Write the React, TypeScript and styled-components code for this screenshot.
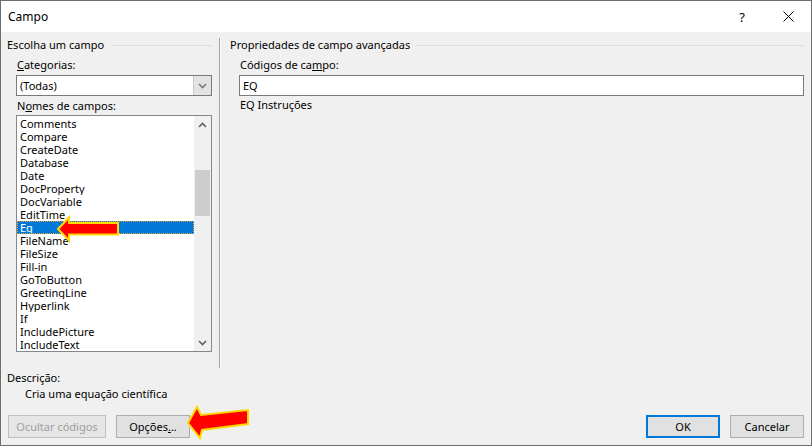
import React from "react";
import styled, { createGlobalStyle } from "styled-components";

const GlobalStyle = createGlobalStyle`
  html, body {
    margin: 0;
    padding: 0;
    background: #f0f0f0;
  }
  body {
    font-family: "Noto Sans", "Open Sans", sans-serif;
    font-size: 11px;
    color: #000;
  }
`;

const fields = [
  "Comments",
  "Compare",
  "CreateDate",
  "Database",
  "Date",
  "DocProperty",
  "DocVariable",
  "EditTime",
  "Eq",
  "FileName",
  "FileSize",
  "Fill-in",
  "GoToButton",
  "GreetingLine",
  "Hyperlink",
  "If",
  "IncludePicture",
  "IncludeText",
];

const Window = styled.div`
  position: relative;
  width: 812px;
  height: 446px;
  box-sizing: border-box;
  border: 1px solid #6e6e6e;
  background: #f0f0f0;
  display: flex;
  flex-direction: column;
  overflow: hidden;
`;

const TitleBar = styled.div`
  height: 31px;
  background: #fff;
  display: flex;
  align-items: center;
  padding-left: 7px;
`;

const Title = styled.div`
  flex: 1;
  font-size: 12px;
`;

const TitleButton = styled.div`
  width: 46px;
  height: 31px;
  display: flex;
  align-items: center;
  justify-content: center;
  font-size: 13px;
`;

const Main = styled.div`
  display: flex;
  height: 336px;
`;

const LeftPanel = styled.div`
  width: 218px;
  padding: 0 7px 0 6px;
  box-sizing: border-box;
  display: flex;
  flex-direction: column;
`;

const RightPanel = styled.div`
  flex: 1;
  padding: 0 7px 0 9px;
  display: flex;
  flex-direction: column;
`;

const Separator = styled.div`
  width: 1px;
  margin-top: 6px;
  background: #a0a0a0;
  border-right: 1px solid #fff;
`;

const GroupLabel = styled.div`
  margin-top: 6px;
  height: 14px;
  display: flex;
  align-items: center;
  line-height: 14px;
  white-space: nowrap;

  &::after {
    content: "";
    flex: 1;
    height: 1px;
    margin-left: 7px;
    margin-top: 1px;
    background: #dcdcdc;
  }
`;

const Indented = styled.div<{ $left: number }>`
  padding-left: ${(p) => p.$left}px;
  display: flex;
  flex-direction: column;
`;

const FieldLabel = styled.div<{ $top: number }>`
  margin-top: ${(p) => p.$top}px;
  height: 14px;
  line-height: 14px;
  padding-left: 1px;
  white-space: nowrap;
`;

const Combo = styled.div`
  margin-top: 3px;
  height: 21px;
  box-sizing: border-box;
  border: 1px solid #7a7a7a;
  background: #fff;
  display: flex;
`;

const ComboText = styled.div`
  flex: 1;
  padding-left: 3px;
  line-height: 19px;
`;

const ComboButton = styled.div`
  width: 17px;
  background: #e3e3e3;
  border-left: 1px solid #c8c8c8;
  display: flex;
  align-items: center;
  justify-content: center;
`;

const ListBox = styled.div`
  margin-top: 2px;
  height: 237px;
  box-sizing: border-box;
  border: 1px solid #828790;
  background: #fff;
  display: flex;
`;

const Items = styled.div`
  flex: 1;
  padding-top: 1px;
  display: flex;
  flex-direction: column;
`;

const Item = styled.div<{ $selected?: boolean }>`
  height: 13px;
  line-height: 13px;
  padding-left: 3px;
  white-space: nowrap;
  overflow: hidden;
  background: ${(p) => (p.$selected ? "#0078d7" : "transparent")};
  color: ${(p) => (p.$selected ? "#fff" : "#000")};
  outline: ${(p) => (p.$selected ? "1px dotted #f0a030" : "none")};
  outline-offset: -1px;
`;

const ScrollBar = styled.div`
  width: 17px;
  background: #f0f0f0;
  display: flex;
  flex-direction: column;
`;

const ScrollArrow = styled.div`
  height: 17px;
  display: flex;
  align-items: center;
  justify-content: center;
`;

const ScrollTrack = styled.div`
  flex: 1;
  padding-top: 37px;
`;

const Thumb = styled.div`
  margin: 0 1px;
  height: 46px;
  background: #cdcdcd;
`;

const TextInput = styled.div`
  margin-top: 3px;
  height: 21px;
  box-sizing: border-box;
  border: 1px solid #7a7a7a;
  background: #fff;
  padding-left: 3px;
  line-height: 19px;
`;

const Bottom = styled.div`
  flex: 1;
  display: flex;
  flex-direction: column;
  padding: 0 7px 7px 6px;
`;

const DescLabel = styled.div`
  margin-top: 3px;
  height: 14px;
  line-height: 14px;
`;

const DescText = styled.div`
  margin-top: 2px;
  padding-left: 18px;
  height: 14px;
  line-height: 14px;
`;

const ButtonRow = styled.div`
  margin-top: auto;
  display: flex;
  padding-left: 1px;
`;

const Spacer = styled.div`
  flex: 1;
`;

const Button = styled.div<{ $width: number; $primary?: boolean; $disabled?: boolean }>`
  width: ${(p) => p.$width}px;
  height: 23px;
  box-sizing: border-box;
  margin-left: 10px;
  background: ${(p) => (p.$disabled ? "#e6e6e6" : "#e1e1e1")};
  border: ${(p) =>
    p.$primary ? "2px solid #0078d7" : p.$disabled ? "1px solid #bfbfbf" : "1px solid #adadad"};
  color: ${(p) => (p.$disabled ? "#a0a0a0" : "#000")};
  display: flex;
  align-items: center;
  justify-content: center;

  &:first-child {
    margin-left: 0;
  }
`;

const Overlay = styled.svg<{ $left: number; $top: number }>`
  position: absolute;
  left: ${(p) => p.$left}px;
  top: ${(p) => p.$top}px;
  overflow: visible;
`;

const Chevron = ({ up, color = "#606060" }: { up?: boolean; color?: string }) => (
  <svg width="9" height="6" viewBox="0 0 9 6">
    <path
      d={up ? "M1 5 L4.5 1.5 L8 5" : "M1 1 L4.5 4.5 L8 1"}
      fill="none"
      stroke={color}
      strokeWidth="1.6"
    />
  </svg>
);

export default function App() {
  return (
    <>
      <GlobalStyle />
      <Window>
        <TitleBar>
          <Title>Campo</Title>
          <TitleButton>?</TitleButton>
          <TitleButton>
            <svg width="11" height="11" viewBox="0 0 11 11">
              <path d="M0.5 0.5 L10.5 10.5 M10.5 0.5 L0.5 10.5" stroke="#000" strokeWidth="1" />
            </svg>
          </TitleButton>
        </TitleBar>

        <Main>
          <LeftPanel>
            <GroupLabel>Escolha um campo</GroupLabel>
            <Indented $left={9}>
              <FieldLabel $top={6}>
                <u>C</u>ategorias:
              </FieldLabel>
              <Combo>
                <ComboText>(Todas)</ComboText>
                <ComboButton>
                  <Chevron color="#7a7a7a" />
                </ComboButton>
              </Combo>
              <FieldLabel $top={3}>
                N<u>o</u>mes de campos:
              </FieldLabel>
              <ListBox>
                <Items>
                  {fields.map((f) => (
                    <Item key={f} $selected={f === "Eq"}>
                      {f}
                    </Item>
                  ))}
                </Items>
                <ScrollBar>
                  <ScrollArrow>
                    <Chevron up />
                  </ScrollArrow>
                  <ScrollTrack>
                    <Thumb />
                  </ScrollTrack>
                  <ScrollArrow>
                    <Chevron />
                  </ScrollArrow>
                </ScrollBar>
              </ListBox>
            </Indented>
          </LeftPanel>

          <Separator />

          <RightPanel>
            <GroupLabel>Propriedades de campo avançadas</GroupLabel>
            <Indented $left={9}>
              <FieldLabel $top={6}>
                Códigos de ca<u>m</u>po:
              </FieldLabel>
              <TextInput>EQ</TextInput>
              <FieldLabel $top={2}>EQ Instruções</FieldLabel>
            </Indented>
          </RightPanel>
        </Main>

        <Bottom>
          <DescLabel>Descrição:</DescLabel>
          <DescText>Cria uma equação científica</DescText>
          <ButtonRow>
            <Button $width={98} $disabled>
              Ocultar códigos
            </Button>
            <Button $width={74}>
              Opções<u>.</u>..
            </Button>
            <Spacer />
            <Button $width={74} $primary>
              OK
            </Button>
            <Button $width={74}>Cancelar</Button>
          </ButtonRow>
        </Bottom>

        <Overlay $left={0} $top={0} width="1" height="1">
          <polygon
            points="57,228 68,216.5 68,222 117,222 117,233.5 68,233.5 68,239.5"
            fill="#ff0000"
            stroke="#ffd800"
            strokeWidth="2"
            strokeLinejoin="miter"
          />
          <polygon
            points="187,422 196,406 200,414 247,409 247,423 201,429 199,437"
            fill="#ff0000"
            stroke="#ffd800"
            strokeWidth="2"
            strokeLinejoin="miter"
          />
        </Overlay>
      </Window>
    </>
  );
}
